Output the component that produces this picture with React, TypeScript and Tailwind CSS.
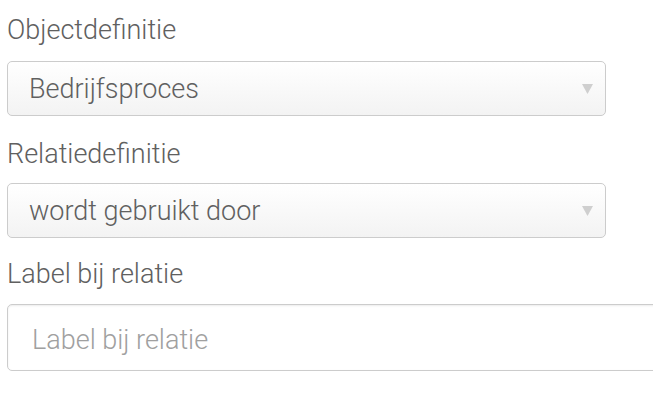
const Arrow = () => (
  <svg width="11" height="10" viewBox="0 0 11 10" className="shrink-0">
    <path d="M0 0 L11 0 L5.5 10 Z" fill="#cfcfcf" />
  </svg>
);

const SelectBox = ({ value }: { value: string }) => (
  <div className="flex h-[55px] w-[599px] items-center justify-between rounded-[5px] border border-[#cccccc] bg-gradient-to-b from-white to-[#f3f3f3] pl-[21px] pr-[12px] text-[27px] font-light text-[#606060]">
    <span className="pt-[2px]">{value}</span>
    <Arrow />
  </div>
);

const App = () => {
  return (
    <div
      className="h-[403px] w-[653px] overflow-hidden bg-white pl-[7px] pt-[14px]"
      style={{ fontFamily: "'Roboto Light', Roboto, 'Noto Sans', sans-serif" }}
    >
      <label className="block text-[27px] font-light leading-[32px] text-[#606060]">
        Objectdefinitie
      </label>
      <div className="mt-[15px]">
        <SelectBox value="Bedrijfsproces" />
      </div>

      <label className="mt-[22px] block text-[27px] font-light leading-[32px] text-[#606060]">
        Relatiedefinitie
      </label>
      <div className="mt-[13px]">
        <SelectBox value="wordt gebruikt door" />
      </div>

      <label className="mt-[20px] block text-[27px] font-light leading-[32px] text-[#606060]">
        Label bij relatie
      </label>
      <input
        className="mt-[14px] block h-[67px] w-[720px] rounded-[5px] border border-[#cccccc] bg-white pl-[24px] pt-[4px] text-[27px] font-light text-[#606060] shadow-[inset_0_1px_2px_rgba(0,0,0,0.08)] outline-none placeholder:text-[#a0a0a0]"
        placeholder="Label bij relatie"
      />
    </div>
  );
};

export default App;
